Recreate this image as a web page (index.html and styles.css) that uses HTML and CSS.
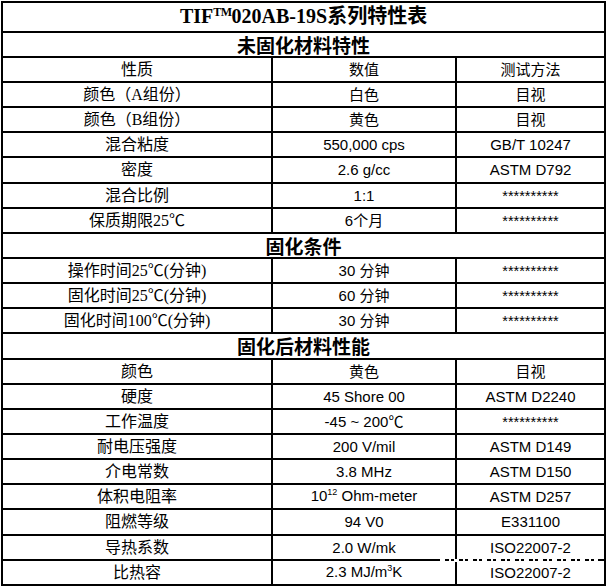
FILE: index.html
```html
<!DOCTYPE html>
<html lang="zh-CN">
<head>
<meta charset="utf-8">
<title>TIF020AB-19S系列特性表</title>
<link rel="stylesheet" href="styles.css">
</head>
<body>
<div class="sheet">
<table class="spec">
  <colgroup>
    <col class="c1">
    <col class="c2">
    <col class="c3">
  </colgroup>
  <tr class="title-row"><td colspan="3" class="title">TIF<sup class="tm">TM</sup>020AB-19S系列特性表</td></tr>
  <tr><td colspan="3" class="section">未固化材料特性</td></tr>
  <tr><td class="name">性质</td><td class="val">数值</td><td class="val">测试方法</td></tr>
  <tr><td class="name">颜色（A组份）</td><td class="val">白色</td><td class="val">目视</td></tr>
  <tr><td class="name">颜色（B组份）</td><td class="val">黄色</td><td class="val">目视</td></tr>
  <tr><td class="name">混合粘度</td><td class="val">550,000 cps</td><td class="val">GB/T 10247</td></tr>
  <tr class="tall"><td class="name">密度</td><td class="val">2.6 g/cc</td><td class="val">ASTM D792</td></tr>
  <tr><td class="name">混合比例</td><td class="val">1:1</td><td class="val stars">**********</td></tr>
  <tr><td class="name">保质期限25℃</td><td class="val">6个月</td><td class="val stars">**********</td></tr>
  <tr><td colspan="3" class="section">固化条件</td></tr>
  <tr><td class="name">操作时间25℃(分钟)</td><td class="val">30 分钟</td><td class="val stars">**********</td></tr>
  <tr><td class="name">固化时间25℃(分钟)</td><td class="val">60 分钟</td><td class="val stars">**********</td></tr>
  <tr><td class="name">固化时间100℃(分钟)</td><td class="val">30 分钟</td><td class="val stars">**********</td></tr>
  <tr class="tall"><td colspan="3" class="section">固化后材料性能</td></tr>
  <tr><td class="name">颜色</td><td class="val">黄色</td><td class="val">目视</td></tr>
  <tr><td class="name">硬度</td><td class="val">45 Shore 00</td><td class="val">ASTM D2240</td></tr>
  <tr><td class="name">工作温度</td><td class="val">-45 ~ 200℃</td><td class="val stars">**********</td></tr>
  <tr><td class="name">耐电压强度</td><td class="val">200 V/mil</td><td class="val">ASTM D149</td></tr>
  <tr><td class="name">介电常数</td><td class="val">3.8 MHz</td><td class="val">ASTM D150</td></tr>
  <tr><td class="name">体积电阻率</td><td class="val">10<sup>12</sup> Ohm-meter</td><td class="val">ASTM D257</td></tr>
  <tr class="tall"><td class="name">阻燃等级</td><td class="val">94 V0</td><td class="val">E331100</td></tr>
  <tr><td class="name">导热系数</td><td class="val">2.0 W/mk</td><td class="val">ISO22007-2</td></tr>
  <tr><td class="name">比热容</td><td class="val">2.3 MJ/m<sup>3</sup>K</td><td class="val">ISO22007-2</td></tr>
</table>
<div class="mark"></div>
</div>
</body>
</html>
```
FILE: styles.css
```css
html, body {
  margin: 0;
  padding: 0;
  background: #fff;
}

.sheet {
  position: relative;
  padding: 1px 0 0 1px;
}

.spec {
  border-collapse: separate;
  border-spacing: 0;
  table-layout: fixed;
  width: 605px;
  border-top: 2px solid #000;
  border-left: 2px solid #000;
  color: #000;
}

.c1 { width: 270px; }
.c2 { width: 184px; }
.c3 { width: 149px; }

.spec td {
  box-sizing: border-box;
  border-right: 2px solid #000;
  border-bottom: 2px solid #000;
  padding: 0;
  text-align: center;
  vertical-align: middle;
  white-space: nowrap;
  line-height: 20px;
}

.spec tr { height: 25px; }
.spec tr.tall { height: 26px; }
.spec tr.title-row { height: 30px; }

.title {
  font-family: "Liberation Serif", "Noto Sans CJK SC", serif;
  font-weight: bold;
  font-size: 20px;
  padding-top: 1px;
}

.title .tm {
  font-size: 12px;
  vertical-align: 0;
  position: relative;
  top: -7px;
  letter-spacing: -0.5px;
}

.section {
  font-family: "Noto Sans CJK SC", sans-serif;
  font-weight: bold;
  font-size: 19px;
}

.name {
  font-family: "Liberation Serif", "Noto Sans CJK SC", serif;
  font-size: 16px;
}

.val {
  font-family: "Liberation Sans", "Noto Sans CJK SC", sans-serif;
  font-size: 15px;
}

.val sup {
  font-size: 9px;
  vertical-align: 0;
  position: relative;
  top: -6px;
}

.stars {
  font-size: 14.5px;
}

.mark {
  position: absolute;
  left: 440px;
  top: 559px;
  width: 158px;
  height: 3px;
  background: repeating-linear-gradient(90deg, #fff 0 5px, transparent 5px 9px, #fff 9px 11px, transparent 11px 14px);
}
```
